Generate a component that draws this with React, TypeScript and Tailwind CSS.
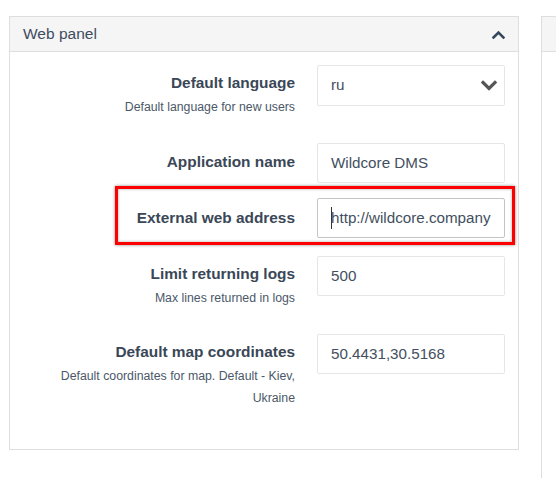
import React from "react";

const font = { fontFamily: '"Liberation Sans", Arial, sans-serif' };

function Field({ value, focused }: { value: string; focused?: boolean }) {
  return (
    <div
      className={
        "h-10 w-[188px] bg-white border rounded-[2px] flex items-center pl-[13px] text-[15.2px] text-[#434f60] " +
        (focused ? "border-[#c4c4c4]" : "border-[#e6e6e6]")
      }
    >
      {focused && <span className="inline-block w-px h-[22px] bg-[#333] -mr-px" />}
      {value}
    </div>
  );
}

function Row({
  label,
  help,
  children,
  className,
  pt,
}: {
  label: string;
  help?: string[];
  children: React.ReactNode;
  className?: string;
  pt?: string;
}) {
  return (
    <div className={"relative flex " + (className ?? "")}>
      <div className={"w-[285px] text-right " + (pt ?? "pt-[7px]")}>
        <div className="text-[15.4px] font-bold leading-[22px] text-[#3a4757]">{label}</div>
        {help && (
          <div className="mt-[2px] mb-[10px]">
            {help.map((h) => (
              <div key={h} className="text-[12.3px] leading-[22px] text-[#4b5869]">
                {h}
              </div>
            ))}
          </div>
        )}
      </div>
      <div className="ml-[22px]">{children}</div>
    </div>
  );
}

export default function App() {
  return (
    <div className="h-[478px] w-[556px] overflow-hidden bg-white" style={font}>
      <div className="flex items-start pt-4 pl-[9px]">
        <div className="w-[510px] h-[434px] shrink-0 border border-[#dedede] bg-white">
          <div className="h-[35px] bg-[#f5f5f5] border-b border-[#dedede] flex items-center justify-between pl-[13px] pr-[13px]">
            <span className="text-[15.5px] text-[#3e4c5e]">Web panel</span>
            <svg width="13" height="9" viewBox="0 0 13 9" className="mt-[1px]">
              <polyline
                points="1.5,7.5 6.5,2.5 11.5,7.5"
                fill="none"
                stroke="#34495e"
                strokeWidth="2.6"
                strokeLinecap="square"
              />
            </svg>
          </div>
          <div className="pt-[13px]">
            <Row label="Default language" help={["Default language for new users"]} className="mb-[15px]">
              <div className="h-[41px] w-[188px] bg-white border border-[#e6e6e6] rounded-[2px] flex items-center justify-between pl-[13px] pr-[7px] text-[15.2px] text-[#434f60]">
                <span>ru</span>
                <svg width="16" height="11" viewBox="0 0 16 11">
                  <polyline
                    points="2,2.5 8,8.5 14,2.5"
                    fill="none"
                    stroke="#555"
                    strokeWidth="3.2"
                    strokeLinecap="square"
                  />
                </svg>
              </div>
            </Row>
            <Row label="Application name" className="mb-[15px]" pt="pt-[8px]">
              <Field value="Wildcore DMS" />
            </Row>
            <Row label="External web address" className="mb-[18px]" pt="pt-[9px]">
              <Field value="http://wildcore.company" focused />
              <div className="absolute left-[105px] right-[3px] top-[-12px] bottom-[-7px] border-[3px] border-[#ff0000] shadow-[0_0_3px_rgba(0,0,0,0.45),inset_0_0_3px_rgba(0,0,0,0.35)]" />
            </Row>
            <Row label="Limit returning logs" help={["Max lines returned in logs"]} className="mb-[15px]">
              <Field value="500" />
            </Row>
            <Row
              label="Default map coordinates"
              help={["Default coordinates for map. Default - Kiev,", "Ukraine"]}
            >
              <Field value="50.4431,30.5168" />
            </Row>
          </div>
        </div>
        <div className="ml-[22px] w-[300px] h-[480px] shrink-0 border border-[#dedede] bg-white">
          <div className="h-[35px] bg-[#f5f5f5] border-b border-[#dedede]" />
        </div>
      </div>
    </div>
  );
}
